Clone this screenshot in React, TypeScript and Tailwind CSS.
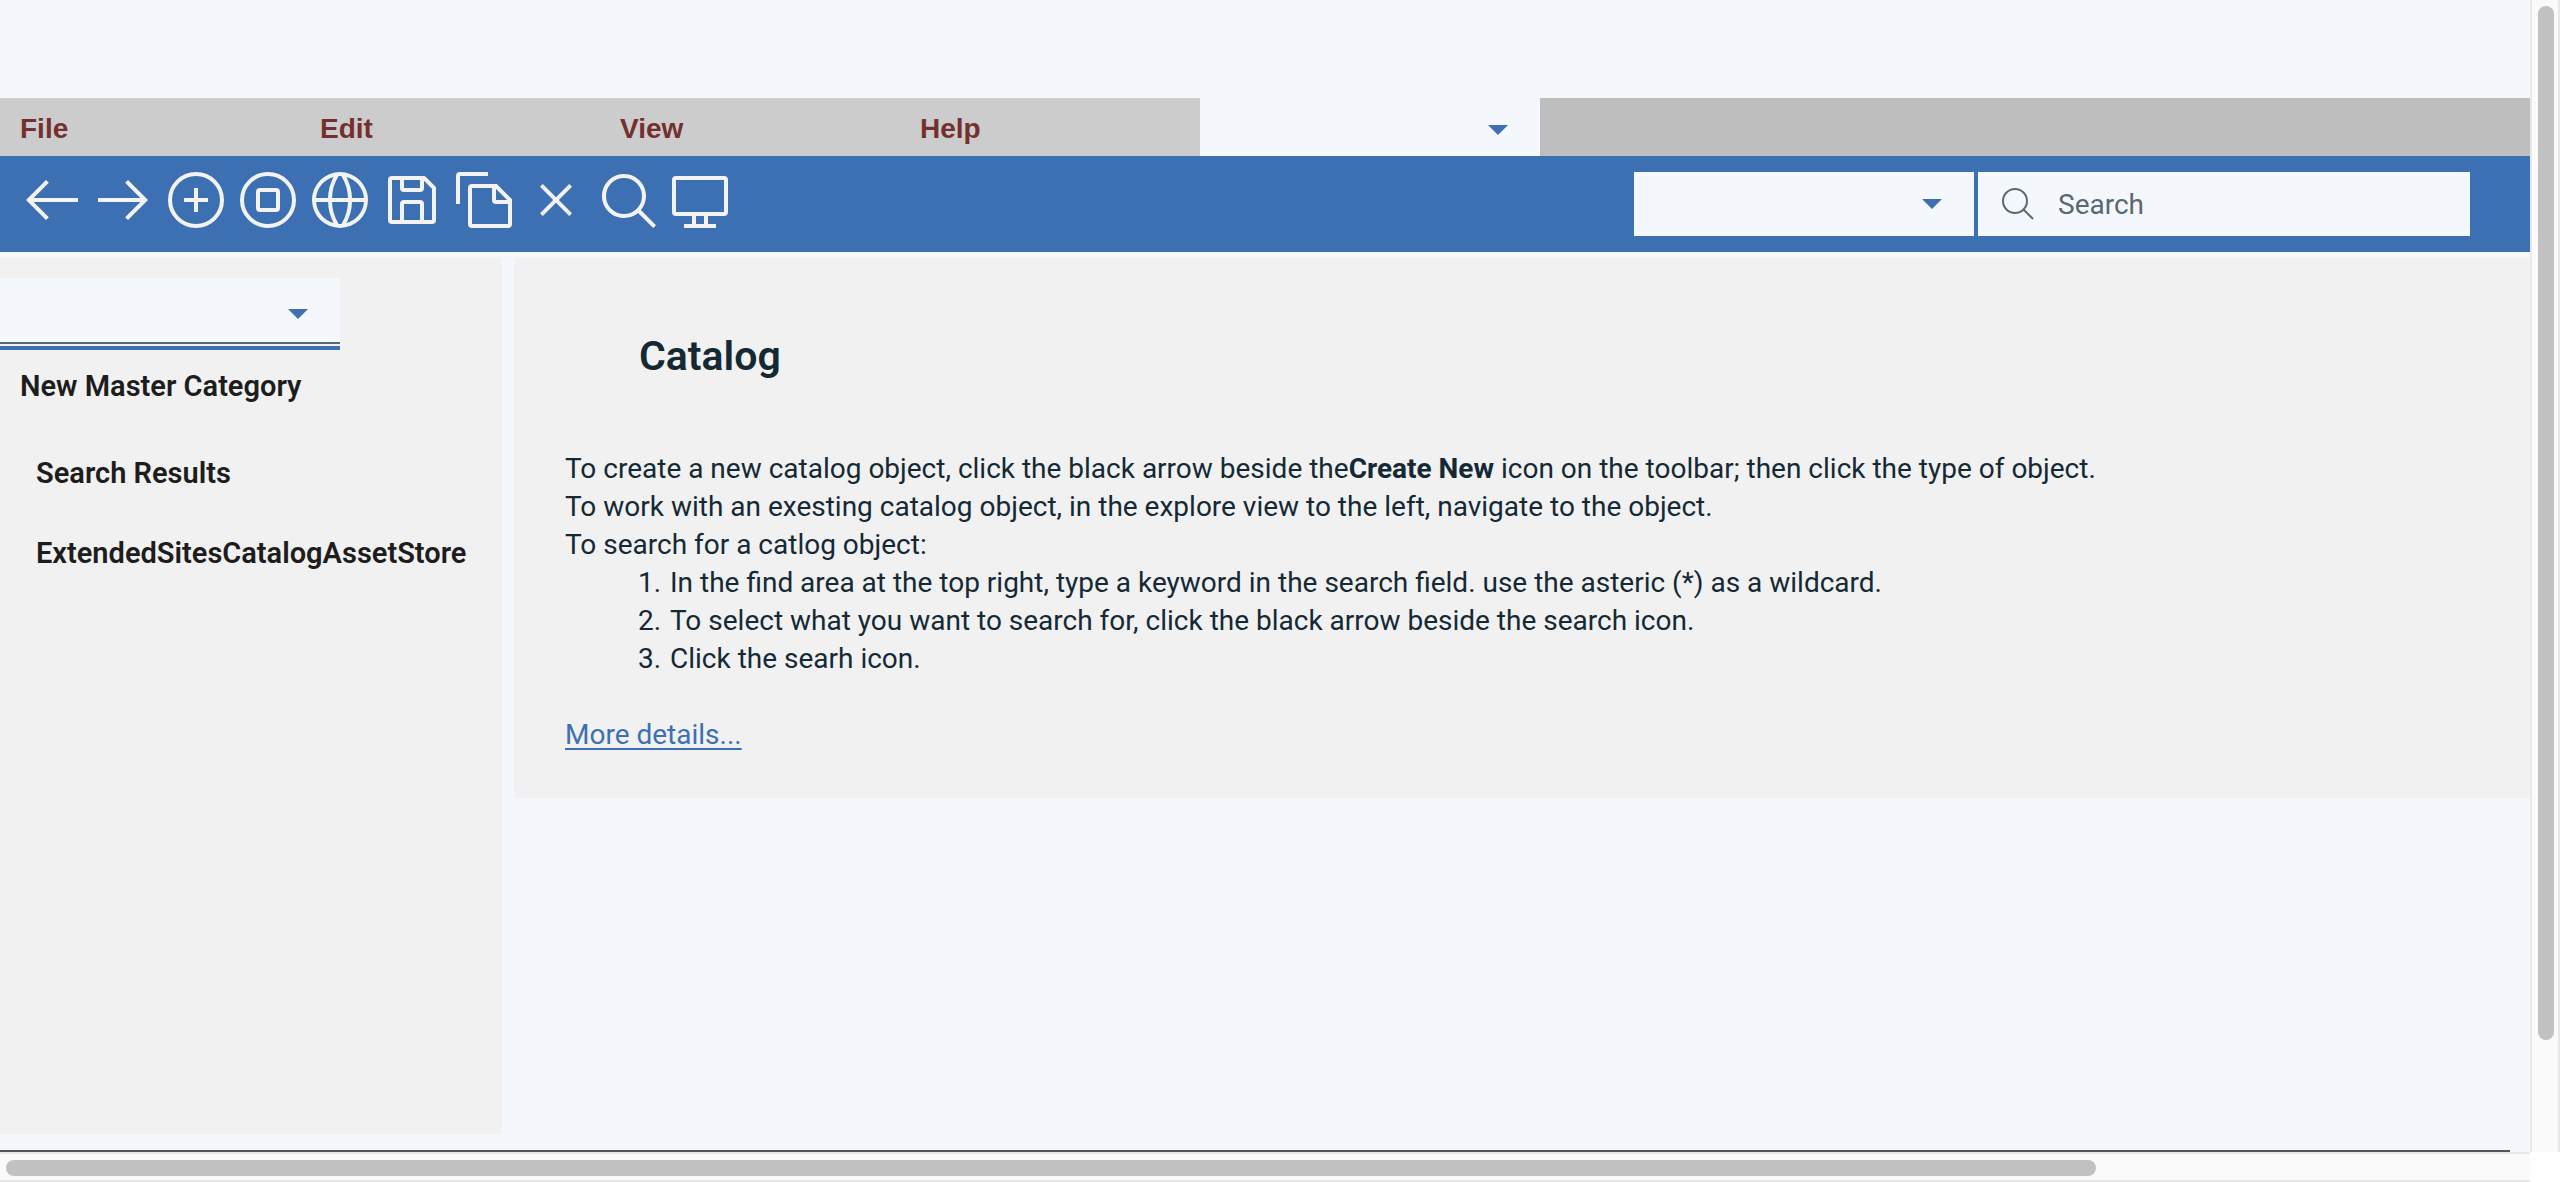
import type { ReactNode } from 'react';
import clsx from 'clsx';

const tools: { label: string; icon: ReactNode }[] = [
  { label: 'Back', icon: <path d="M13 26l1.41-1.41L6.83 17H29v-2H6.83l7.58-7.59L13 6 3 16z" /> },
  { label: 'Forward', icon: <path d="M18 6l-1.43 1.39L24.15 15H3v2h21.15l-7.58 7.57L18 26l10-10z" /> },
  {
    label: 'Create new',
    icon: (
      <>
        <circle cx="16" cy="16" r="13" fill="none" stroke="currentColor" strokeWidth="2" />
        <path d="M15 10h2v5h5v2h-5v5h-2v-5h-5v-2h5z" />
      </>
    ),
  },
  {
    label: 'Stop',
    icon: (
      <g fill="none" stroke="currentColor" strokeWidth="2">
        <circle cx="16" cy="16" r="13" />
        <rect x="11" y="11" width="10" height="10" rx="1" />
      </g>
    ),
  },
  {
    label: 'Open site',
    icon: (
      <path d="M16,2A14,14,0,1,0,30,16,14,14,0,0,0,16,2ZM28,15H22A24.26,24.26,0,0,0,19.21,4.45,12,12,0,0,1,28,15ZM16,28a5,5,0,0,1-.67,0A21.85,21.85,0,0,1,12,17H20a21.85,21.85,0,0,1-3.3,11A5,5,0,0,1,16,28ZM12,15a21.85,21.85,0,0,1,3.3-11,6,6,0,0,1,1.34,0A21.85,21.85,0,0,1,20,15Zm.76-10.55A24.26,24.26,0,0,0,10,15h-6A12,12,0,0,1,12.79,4.45ZM4.05,17h6a24.26,24.26,0,0,0,2.75,10.55A12,12,0,0,1,4.05,17ZM19.21,27.55A24.26,24.26,0,0,0,22,17h6A12,12,0,0,1,19.21,27.55Z" />
    ),
  },
  {
    label: 'Save',
    icon: (
      <path d="M27.71,9.29l-5-5A1,1,0,0,0,22,4H6A2,2,0,0,0,4,6V26a2,2,0,0,0,2,2H26a2,2,0,0,0,2-2V10A1,1,0,0,0,27.71,9.29ZM12,6h8v4H12Zm8,20H12V18h8Zm2,0V18a2,2,0,0,0-2-2H12a2,2,0,0,0-2,2v8H6V6h4v4a2,2,0,0,0,2,2h8a2,2,0,0,0,2-2V6.41l4,4V26Z" />
    ),
  },
  {
    label: 'Copy',
    icon: (
      <g fill="none" stroke="currentColor" strokeWidth="2">
        <path d="M3 18V4a1 1 0 0 1 1-1h14" />
        <path d="M22 9H10a1 1 0 0 0-1 1v18a1 1 0 0 0 1 1h18a1 1 0 0 0 1-1V16z" />
        <path d="M21 9v7a1 1 0 0 0 1 1h7" />
      </g>
    ),
  },
  {
    label: 'Delete',
    icon: <path d="M24 9.4L22.6 8 16 14.6 9.4 8 8 9.4l6.6 6.6L8 22.6 9.4 24l6.6-6.6 6.6 6.6 1.4-1.4-6.6-6.6z" />,
  },
  {
    label: 'Find',
    icon: (
      <path d="M30,28.59,22.45,21A11,11,0,1,0,21,22.45L28.59,30ZM5,14a9,9,0,1,1,9,9A9,9,0,0,1,5,14Z" />
    ),
  },
  {
    label: 'Preview',
    icon: (
      <path d="M28 4H4a2 2 0 0 0-2 2v16a2 2 0 0 0 2 2h8v4H8v2h16v-2h-4v-4h8a2 2 0 0 0 2-2V6a2 2 0 0 0-2-2zM18 28h-4v-4h4zm10-6H4V6h24z" />
    ),
  },
];

function Dropdown({ label, className }: { label: string; className?: string }) {
  return (
    <div className={clsx('relative w-[340px] shrink-0 bg-[#f4f7fb]', className)}>
      <select
        aria-label={label}
        className="block h-full w-full appearance-none bg-transparent pr-16 pl-5 text-[28px] text-[#152935] outline-none"
      />
      <svg
        viewBox="0 0 20 10"
        className="pointer-events-none absolute top-1/2 right-8 h-[10px] w-5 -translate-y-1/2 fill-[#3d70b2]"
        aria-hidden="true"
      >
        <path d="M0 0h20L10 10z" />
      </svg>
    </div>
  );
}

function MenuBar() {
  return (
    <div className="flex h-[58px] shrink-0 bg-[#bebebe]">
      <nav className="flex bg-[#ccc] font-['Liberation_Sans',sans-serif]">
        {['File', 'Edit', 'View', 'Help'].map((name) => (
          <button key={name} type="button" className="w-[300px] pt-1 pl-5 text-left text-[28px] font-bold text-[#73302f]">
            {name}
          </button>
        ))}
      </nav>
      <div className="bg-[#f4f7fb] pt-[6px]">
        <Dropdown label="Store" className="h-[52px]" />
      </div>
    </div>
  );
}

function Toolbar() {
  return (
    <div className="flex h-24 shrink-0 items-center justify-between bg-[#3d70b2] pr-[60px] pl-5">
      <div className="flex gap-2 pb-2 text-[#f3f3f3]">
        {tools.map(({ label, icon }) => (
          <button key={label} type="button" aria-label={label} className="size-16">
            <svg viewBox="0 0 32 32" fill="currentColor" className="size-16">
              {icon}
            </svg>
          </button>
        ))}
      </div>
      <div className="flex h-16 gap-1">
        <Dropdown label="Search type" />
        <label className="flex w-[492px] items-center gap-6 bg-[#f4f7fb] px-6">
          <svg viewBox="0 0 32 32" className="size-8 shrink-0 fill-none stroke-[#5a6872] stroke-2" aria-hidden="true">
            <circle cx="13" cy="13" r="12" />
            <path d="M21.5 21.5L31 31" />
          </svg>
          <input
            type="text"
            aria-label="Search"
            placeholder="Search"
            className="h-16 w-full min-w-0 bg-transparent text-[28px] text-[#152935] outline-none placeholder:text-[#5a6872]"
          />
        </label>
      </div>
    </div>
  );
}

function Sidebar() {
  return (
    <aside className="w-[502px] shrink-0 bg-[#f1f1f1] pt-5 text-[29px] font-semibold text-[#1d1d1d]">
      <div className="w-[340px] border-b-4 border-[#3d70b2] pb-[2px]">
        <div className="border-b-2 border-[#5a6872] bg-[#f4f7fb] pt-2">
          <Dropdown label="Catalog" className="h-14" />
        </div>
      </div>
      <h2 className="mt-4 mb-7 pl-5 leading-10">New Master Category</h2>
      <ul>
        {['Search Results', 'ExtendedSitesCatalogAssetStore'].map((name) => (
          <li key={name}>
            <button type="button" className="h-20 w-full pl-9 text-left">
              {name}
            </button>
          </li>
        ))}
      </ul>
    </aside>
  );
}

const steps = [
  'In the find area at the top right, type a keyword in the search field. use the asteric (*) as a wildcard.',
  'To select what you want to search for, click the black arrow beside the search icon.',
  'Click the searh icon.',
];

function Content() {
  return (
    <main className="min-w-0 flex-1 self-start bg-[#f1f1f1] pt-[74px] pb-11 pl-[51px] text-[28px] leading-[38px] text-[#152935]">
      <h1 className="mb-[70px] pl-[74px] text-[41px] leading-[48px] font-semibold">Catalog</h1>
      <p>
        To create a new catalog object, click the black arrow beside the
        <strong className="font-bold">Create New</strong> icon on the toolbar; then click the type of object.
      </p>
      <p>To work with an exesting catalog object, in the explore view to the left, navigate to the object.</p>
      <p>To search for a catlog object:</p>
      <ol className="pl-[73px]">
        {steps.map((step, i) => (
          <li key={step} className="flex">
            <span className="w-8 shrink-0">{i + 1}.</span>
            {step}
          </li>
        ))}
      </ol>
      <p className="mt-[38px]">
        <a href="#details" className="text-[#3d70b2] underline decoration-2 underline-offset-4">
          More details...
        </a>
      </p>
    </main>
  );
}

export default function App() {
  return (
    <div className="grid h-screen grid-cols-[minmax(0,1fr)_30px] grid-rows-[minmax(0,1fr)_30px] overflow-hidden bg-white font-[Roboto,sans-serif]">
      <div className="flex flex-col overflow-hidden bg-[#f4f7fb] pt-[98px]">
        <MenuBar />
        <Toolbar />
        <div className="mt-[6px] mb-4 flex min-h-0 flex-1 gap-3">
          <Sidebar />
          <Content />
        </div>
        <div className="mr-5 h-[2px] shrink-0 bg-[#55565a]" />
      </div>
      <div className="border-x-2 border-[#e8e8e8] bg-[#fafafa] pt-[6px] pr-1 pl-[6px]">
        <div className="h-[90.2%] w-4 rounded-full bg-[#c1c1c1]" />
      </div>
      <div className="border-y-2 border-[#e8e8e8] bg-[#fafafa] pt-[6px] pl-[6px]">
        <div className="h-4 w-[82.8%] rounded-full bg-[#c1c1c1]" />
      </div>
    </div>
  );
}
